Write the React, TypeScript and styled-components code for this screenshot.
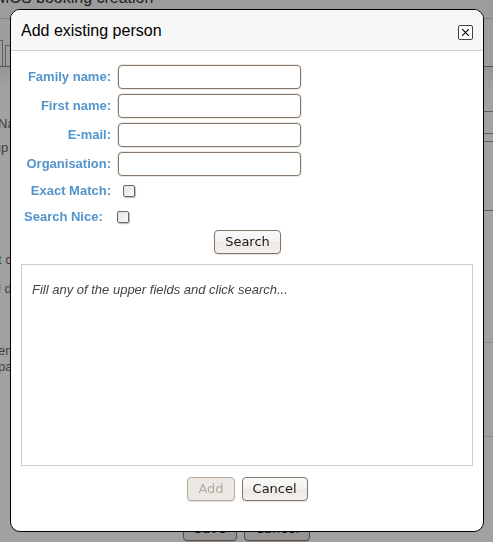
import React from "react";
import styled, { createGlobalStyle } from "styled-components";

const GlobalStyle = createGlobalStyle`
  *, *::before, *::after { box-sizing: border-box; }
  body {
    margin: 0;
    overflow: hidden;
    background: #fff;
    color: #444;
    font-family: "Liberation Sans", Arial, sans-serif;
    font-size: 13px;
  }
`;

const Page = styled.main`
  height: 100vh;
  overflow: hidden;
`;

const PageTitle = styled.h1`
  display: flow-root;
  height: 19px;
  margin: 0;
  border-bottom: 1px solid #ccc;
  background: #f7f7f7;
  color: #333;
  font-size: 16px;
  font-weight: normal;
  line-height: 20px;
  text-indent: -4px;
  white-space: nowrap;

  span { display: block; margin-top: -12px; }
`;

const TabBar = styled.div`
  display: flex;
  align-items: flex-end;
  height: 48px;
  padding-top: 21px;
  border-bottom: 1px solid #888;
  background: #f9f9f9;
`;

const Tab = styled.div<{ $active?: boolean }>`
  width: ${(p) => (p.$active ? "3px" : "60px")};
  height: ${(p) => (p.$active ? "26px" : "21px")};
  margin-right: 2px;
  border: 1px solid #999;
  border-bottom: 0;
  border-left-width: ${(p) => (p.$active ? "0" : "1px")};
`;

const PageBody = styled.div`
  display: grid;
  grid-template-columns: 16px 1fr;
  height: 450px;
  background: linear-gradient(#eee, #fff 20px);
`;

const PageLabels = styled.div`
  padding-top: 49px;
  line-height: 16px;
  color: #666;
  white-space: nowrap;
`;

const PageLabel = styled.div<{ $gap?: number }>`
  margin-top: ${(p) => p.$gap ?? 0}px;
  margin-left: -2px;
`;

const PageFields = styled.div`
  padding-top: 44px;
`;

const FieldBox = styled.div<{ $tall?: boolean }>`
  height: ${(p) => (p.$tall ? "70px" : "23px")};
  margin-bottom: 7px;
  border: 1px solid #a1907f;
  border-right: 0;
`;

const Divider = styled.hr<{ $gap: number }>`
  height: 1px;
  margin: ${(p) => p.$gap}px 0 0;
  border: 0;
  background: #ddd;
`;

const Button = styled.button`
  height: 24px;
  padding: 0 10px;
  border: 1px solid #82766a;
  border-radius: 4px;
  background: linear-gradient(#faf9f8, #f4f1ee 50%, #ece8e4 52%, #f3f0ed);
  box-shadow: 0 1px 1px #e4e0dc;
  color: #1a1a1a;
  font-family: "DejaVu Sans", sans-serif;
  font-size: 13px;
  line-height: 20px;

  &:disabled {
    border-color: #b8ab9e;
    background: #ece8e4;
    color: #b3a99e;
  }
`;

const ButtonRow = styled.div`
  display: flex;
  justify-content: center;
  gap: 7px;
`;

const Overlay = styled.div`
  position: fixed;
  inset: 0;
  display: flex;
  padding: 9px 9px 10px 10px;
  background: rgba(0, 0, 0, 0.37);
`;

const Dialog = styled.section`
  flex: 1;
  display: flex;
  flex-direction: column;
  overflow: hidden;
  border: 1px solid #000;
  border-radius: 10px;
  background: #fff;
`;

const DialogHeader = styled.header`
  display: flex;
  align-items: center;
  justify-content: space-between;
  height: 41px;
  padding: 4px 10px 0;
  border-bottom: 1px solid #ccc;
  background: #f7f7f7;
`;

const DialogTitle = styled.h2`
  margin: 0;
  padding-bottom: 2px;
  color: #000;
  font-size: 16px;
  font-weight: normal;
  line-height: 20px;
`;

const CloseButton = styled.button`
  width: 15px;
  height: 15px;
  padding: 0;
  border: 1px solid #444;
  border-radius: 2px;
  background: #fff;

  svg { display: block; margin: 3px; }
`;

const DialogBody = styled.div`
  flex: 1;
  display: flex;
  flex-direction: column;
  padding: 14px 9px 30px 10px;
`;

const SearchForm = styled.form`
  padding: 0 3px;
`;

const FormGrid = styled.div`
  display: grid;
  grid-template-columns: 87px 183px;
  column-gap: 7px;
  row-gap: 5px;
  align-items: center;
`;

const Label = styled.label`
  color: #5294cc;
  font-size: 13px;
  font-weight: bold;
  line-height: 20px;
  text-align: right;
  white-space: nowrap;
`;

const TextInput = styled.input`
  width: 100%;
  height: 24px;
  padding: 0 5px;
  border: 1px solid #85766a;
  border-radius: 4px;
  outline: 0;
  background: #fff;
  box-shadow: 0 0 0 1px #ece9e4;
  font: inherit;
`;

const Checkbox = styled.input<{ $inset?: boolean }>`
  appearance: none;
  width: 12px;
  height: 12px;
  margin: 0 0 0 ${(p) => (p.$inset ? "5px" : "0")};
  border: 1px solid #666;
  border-radius: 2px;
  background: linear-gradient(135deg, #e4e4e4, #fafafa);
  box-shadow: 1px 1px 1px #bbb;

  &:checked {
    background: #5294cc;
  }
`;

const CheckRow = styled.div`
  display: flex;
  align-items: center;
  gap: 14px;
  margin: 6px 0 3px;
`;

const Results = styled.div`
  flex: 1;
  margin: 10px 1px 11px 0;
  padding: 17px 10px;
  border: 1px solid #ccc;
  color: #444;
  font-style: italic;
  line-height: 16px;
`;

const textFields = [
  { id: "family-name", label: "Family name:" },
  { id: "first-name", label: "First name:" },
  { id: "email", label: "E-mail:" },
  { id: "organisation", label: "Organisation:" },
];

export default function App() {
  return (
    <>
      <GlobalStyle />
      <Page aria-hidden="true">
        <PageTitle><span>MCS booking creation</span></PageTitle>
        <TabBar>
          <Tab $active />
          <Tab />
        </TabBar>
        <PageBody>
          <PageLabels>
            <PageLabel>Na</PageLabel>
            <PageLabel $gap={8}>ip</PageLabel>
            <PageLabel $gap={96}>t c</PageLabel>
            <PageLabel $gap={13}>l d</PageLabel>
            <PageLabel $gap={46}>em</PageLabel>
            <PageLabel>pa</PageLabel>
          </PageLabels>
          <PageFields>
            <FieldBox />
            <FieldBox $tall />
            <Divider $gap={131} />
            <Divider $gap={93} />
          </PageFields>
        </PageBody>
        <ButtonRow>
          <Button type="button" tabIndex={-1}>Save</Button>
          <Button type="button" tabIndex={-1}>Cancel</Button>
        </ButtonRow>
      </Page>
      <Overlay>
        <Dialog role="dialog" aria-modal="true" aria-labelledby="dialog-title">
          <DialogHeader>
            <DialogTitle id="dialog-title">Add existing person</DialogTitle>
            <CloseButton type="button" aria-label="Close">
              <svg width="7" height="7" viewBox="0 0 7 7" aria-hidden="true">
                <path d="M0 0 7 7M7 0 0 7" stroke="#000" strokeWidth="1.1" />
              </svg>
            </CloseButton>
          </DialogHeader>
          <DialogBody>
            <SearchForm onSubmit={(e) => e.preventDefault()}>
              <FormGrid>
                {textFields.map((f) => (
                  <React.Fragment key={f.id}>
                    <Label htmlFor={f.id}>{f.label}</Label>
                    <TextInput id={f.id} type="text" />
                  </React.Fragment>
                ))}
                <Label htmlFor="exact-match">Exact Match:</Label>
                <Checkbox id="exact-match" type="checkbox" $inset />
              </FormGrid>
              <CheckRow>
                <Label htmlFor="search-nice">Search Nice:</Label>
                <Checkbox id="search-nice" type="checkbox" />
              </CheckRow>
              <ButtonRow>
                <Button type="submit">Search</Button>
              </ButtonRow>
            </SearchForm>
            <Results>Fill any of the upper fields and click search...</Results>
            <ButtonRow>
              <Button type="button" disabled>Add</Button>
              <Button type="button">Cancel</Button>
            </ButtonRow>
          </DialogBody>
        </Dialog>
      </Overlay>
    </>
  );
}
